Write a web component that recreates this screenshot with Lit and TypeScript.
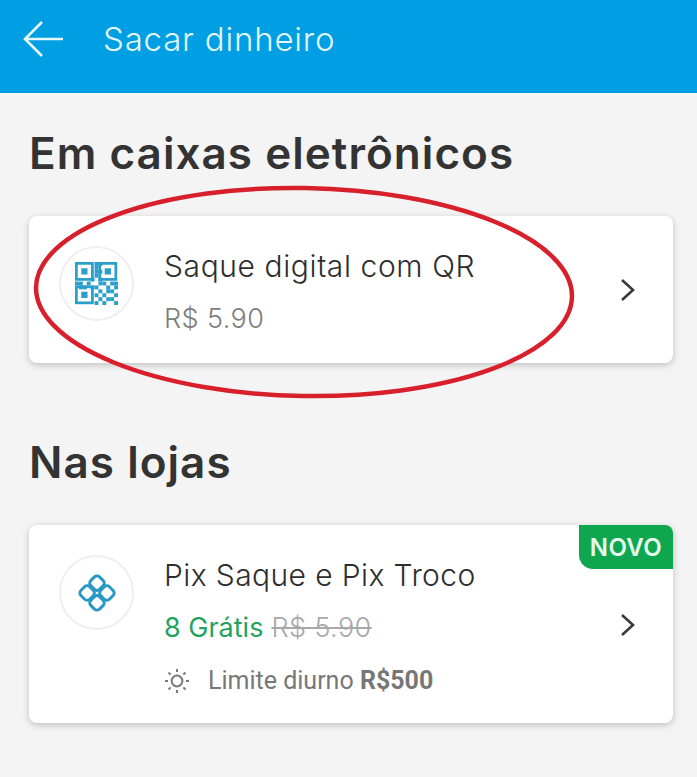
import { LitElement, html, css, svg } from "lit";
import { customElement } from "lit/decorators.js";

// QR modules on an 11x11 grid, finder squares are drawn separately
const qrDots = [
  [5, 0], [6, 0], [5, 1], [5, 2], [6, 2], [5, 3], [6, 4], [4, 4],
  [0, 5], [1, 5], [3, 5], [1, 6], [2, 6], [4, 6], [6, 5], [7, 5], [9, 5], [10, 5],
  [5, 6], [8, 6], [10, 6], [6, 7], [8, 7], [9, 7], [5, 8], [7, 8], [10, 8],
  [6, 9], [8, 9], [9, 9], [5, 10], [7, 10], [10, 10],
];

@customElement("app-root")
class AppRoot extends LitElement {
  static styles = css`
    :host {
      display: block;
      position: relative;
      width: 697px;
      height: 777px;
      overflow: hidden;
      background: #f4f4f4;
      font-family: "Inter", "Liberation Sans", sans-serif;
      color: #333;
    }

    * {
      box-sizing: border-box;
    }

    .topbar {
      height: 93px;
      background: #009ee3;
      display: flex;
      align-items: center;
      gap: 39px;
      padding: 0 0 15px 23px;
      color: #e4f8fb;
      font-size: 33px;
      font-weight: 300;
      letter-spacing: 0.8px;
    }

    .topbar svg {
      display: block;
    }

    .content {
      padding: 33px 24px 0 29px;
    }

    h2 {
      margin: 0;
      font-size: 44px;
      line-height: 54px;
      font-weight: 600;
      letter-spacing: 1.05px;
      color: #333;
    }

    .card {
      position: relative;
      margin-top: 36px;
      background: #fff;
      border-radius: 8px;
      box-shadow: 0 2px 7px rgba(0, 0, 0, 0.22);
      display: flex;
      align-items: flex-start;
      padding: 30px 0 0 30px;
      overflow: hidden;
    }

    .first {
      height: 147px;
      margin-bottom: 72px;
    }

    .second {
      height: 198px;
    }

    .logo {
      width: 75px;
      height: 75px;
      flex: none;
      border: 2px solid #efefef;
      border-radius: 50%;
      display: flex;
      align-items: center;
      justify-content: center;
    }

    .text {
      margin-left: 30px;
      flex: 1;
    }

    .title {
      font-size: 30px;
      line-height: 40px;
      font-weight: 300;
      letter-spacing: 0.6px;
      color: #2e2e2e;
    }

    .second .title {
      letter-spacing: 0.4px;
    }

    .price {
      margin-top: 16px;
      font-size: 27px;
      line-height: 34px;
      font-weight: 300;
      letter-spacing: 0.4px;
      color: #7e7e7e;
    }

    .free {
      color: #1fa35f;
      font-weight: 400;
      letter-spacing: 0;
    }

    .old {
      color: #a8a8a8;
      text-decoration: line-through;
      text-decoration-thickness: 2px;
    }

    .limit {
      display: flex;
      align-items: center;
      gap: 17px;
      margin-top: 21px;
      margin-left: -1px;
      font-family: "Roboto", "Liberation Sans", sans-serif;
      font-size: 25px;
      line-height: 30px;
      color: #777;
    }

    .limit b {
      font-weight: 700;
    }

    .chevron {
      position: absolute;
      right: 36px;
      display: block;
    }

    .first .chevron {
      top: 61px;
    }

    .second .chevron {
      top: 87px;
    }

    .badge {
      position: absolute;
      top: 0;
      right: 0;
      width: 94px;
      height: 44px;
      background: #0ea74f;
      border-radius: 0 0 0 14px;
      color: #e6fbec;
      font-size: 24px;
      font-weight: 600;
      letter-spacing: 0.4px;
      display: flex;
      align-items: center;
      justify-content: center;
    }

    .circled {
      position: absolute;
      left: 0;
      top: 0;
      pointer-events: none;
    }
  `;

  private chevron() {
    return html`<svg class="chevron" width="18" height="26" viewBox="0 0 18 26">
      <path d="M3 3l11 10L3 23" fill="none" stroke="#3a3a3a" stroke-width="2.6" />
    </svg>`;
  }

  private qrIcon() {
    const finder = (x: number, y: number) => svg`
      <rect x=${x + 0.35} y=${y + 0.35} width="4.1" height="4.1" fill="none" stroke="#2a9fcb" stroke-width="0.7" />
      <rect x=${x + 1.6} y=${y + 1.6} width="1.6" height="1.6" fill="#2a9fcb" />`;
    return html`<svg width="43" height="43" viewBox="0 0 11 11">
      ${finder(0, 0)} ${finder(6, 0)} ${finder(0, 6)}
      ${qrDots.map(([x, y]) => svg`<rect x=${x} y=${y} width="1" height="1" fill="#2a9fcb" />`)}
    </svg>`;
  }

  private pixIcon() {
    const petals = [
      [20, 10.6],
      [10.6, 20],
      [29.4, 20],
      [20, 29.4],
    ];
    return html`<svg width="42" height="42" viewBox="0 0 40 40">
      ${petals.map(
        ([x, y]) => svg`<rect x=${x - 5.9} y=${y - 5.9} width="11.8" height="11.8" rx="3.4"
          transform="rotate(45 ${x} ${y})" fill="none" stroke="#2a98c4" stroke-width="2.8" />`
      )}
    </svg>`;
  }

  private sunIcon() {
    const rays = [0, 45, 90, 135, 180, 225, 270, 315];
    return html`<svg width="28" height="28" viewBox="0 0 28 28">
      <circle cx="14" cy="14" r="5.4" fill="none" stroke="#777" stroke-width="2" />
      ${rays.map(
        a => svg`<line x1="14" y1="2" x2="14" y2="5" transform="rotate(${a} 14 14)"
          stroke="#777" stroke-width="2" />`
      )}
    </svg>`;
  }

  render() {
    return html`
      <div class="topbar">
        <svg width="41" height="36" viewBox="0 0 41 36">
          <path d="M40 18H2M19 1L2 18l17 17" fill="none" stroke="#e4f8fb" stroke-width="2.6" />
        </svg>
        <span>Sacar dinheiro</span>
      </div>
      <div class="content">
        <h2>Em caixas eletrônicos</h2>
        <div class="card first">
          <div class="logo">${this.qrIcon()}</div>
          <div class="text">
            <div class="title">Saque digital com QR</div>
            <div class="price">R$ 5.90</div>
          </div>
          ${this.chevron()}
        </div>
        <h2>Nas lojas</h2>
        <div class="card second">
          <div class="logo">${this.pixIcon()}</div>
          <div class="text">
            <div class="title">Pix Saque e Pix Troco</div>
            <div class="price"><span class="free">8 Grátis</span> <span class="old">R$ 5.90</span></div>
            <div class="limit">${this.sunIcon()}<span>Limite diurno <b>R$500</b></span></div>
          </div>
          ${this.chevron()}
          <div class="badge">NOVO</div>
        </div>
      </div>
      <svg class="circled" width="697" height="777" viewBox="0 0 697 777">
        <ellipse cx="304" cy="292" rx="268" ry="104" transform="rotate(1 304 292)" fill="none" stroke="#d8202c" stroke-width="4.5" />
      </svg>
    `;
  }
}

export { AppRoot };
